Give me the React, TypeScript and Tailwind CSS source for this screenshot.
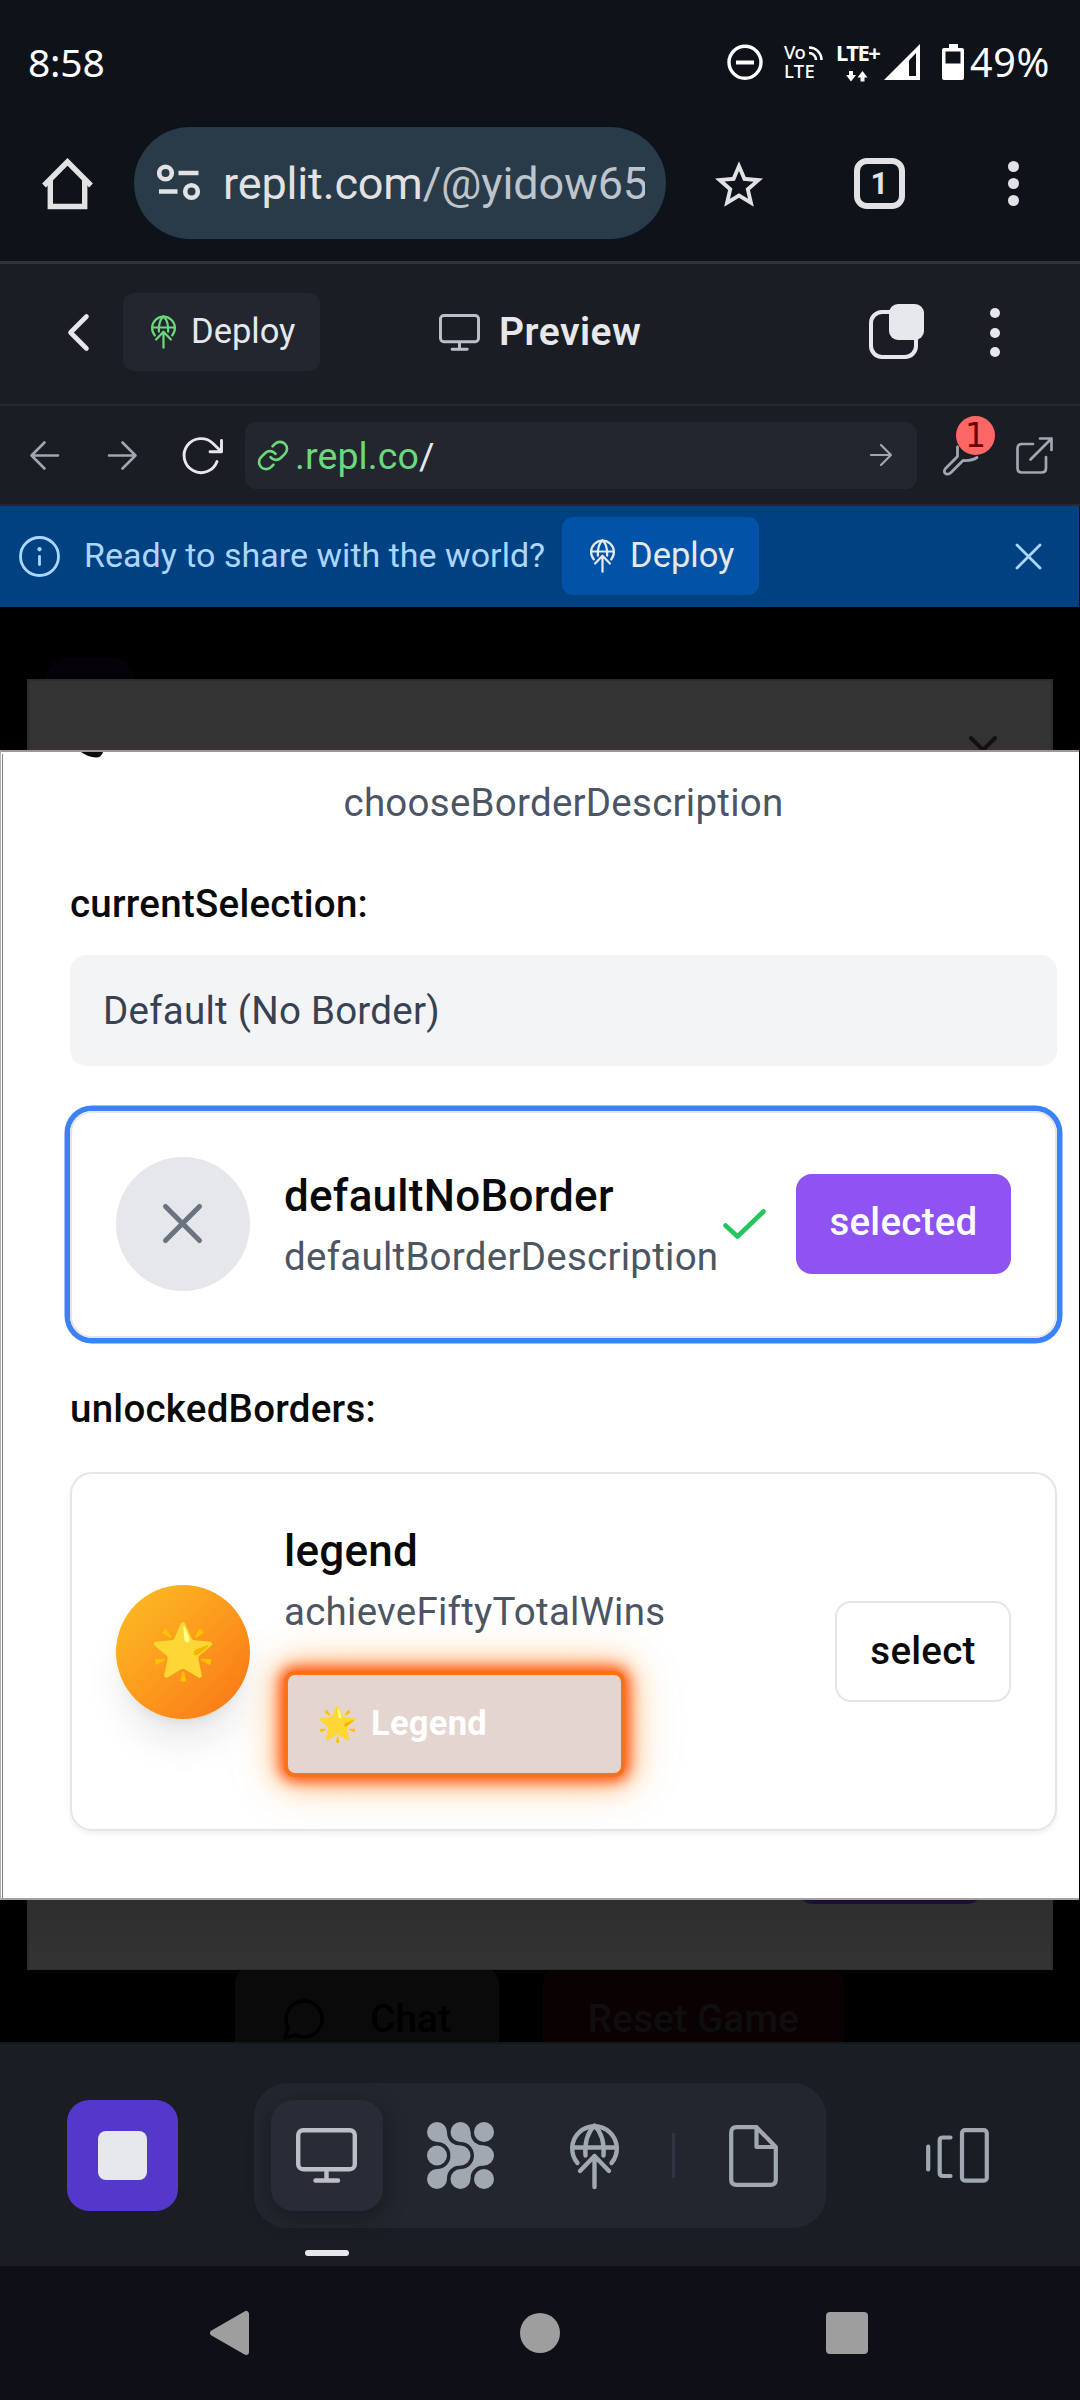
import type { ReactNode } from "react";

function Stroke({ w, h, vb, sw, children, className = "" }: { w: number; h: number; vb?: string; sw: number; children: ReactNode; className?: string }) {
  return (
    <svg width={w} height={h} viewBox={vb ?? `0 0 ${w} ${h}`} fill="none" stroke="currentColor" strokeWidth={sw} strokeLinecap="round" strokeLinejoin="round" className={`block shrink-0 overflow-visible ${className}`}>
      {children}
    </svg>
  );
}

function DeployIcon({ w, className = "" }: { w: number; className?: string }) {
  return (
    <Stroke w={w} h={(w * 66) / 49} vb="0 0 49 66" sw={4.4} className={className}>
      <path d="M7.5 40A22.3 22.3 0 1 1 41.5 40" />
      <path d="M2.5 24.5H46.5" />
      <path d="M15.5 32.5C14.5 20 18 9 24.5 2.5C31 9 34.500 20 33.500 32.500" />
      <path d="M24.500 64V33M10 48L24.500 33L39 48" />
    </Stroke>
  );
}

function MonitorIcon({ w, h, className = "" }: { w: number; h: number; className?: string }) {
  return (
    <Stroke w={w} h={h} vb="0 0 61 55" sw={4.4} className={className}>
      <rect x="2.200" y="2.200" width="56.600" height="39" rx="5" />
      <path d="M30.500 42V52M19.500 52.500H42" />
    </Stroke>
  );
}

function StatusBar() {
  return (
    <div className="flex h-[124px] items-start bg-[#0e131a] pl-[28px] font-['Noto_Sans'] text-white">
      <span className="mt-[35px] w-[90px] text-[39px] leading-[54px] tracking-[-0.200px]">8:58</span>
      <Stroke w={36} h={36} sw={3.4} className="ml-[609px] mt-[44px]">
        <circle cx="18" cy="18.300" r="16" />
        <path d="M11 18.500H25" strokeWidth="4" strokeLinecap="square" />
      </Stroke>
      <div className="relative ml-[21px] mt-[42px] h-[40px] w-[38px] font-['Noto_Sans'] text-[18.500px] font-medium leading-[19px]">
        <div className="tracking-[-0.5px]">Vo</div>
        <div className="tracking-[0.3px]">LTE</div>
        <svg width="14" height="16" className="absolute left-[25px] top-[4px]" fill="none" stroke="currentColor" strokeWidth="2.600">
          <path d="M0 1.500A12.500 12.500 0 0 1 12.500 14M0 7A7 7 0 0 1 7 14" />
        </svg>
      </div>
      <div className="ml-[14px] mt-[41px] w-[48px] font-['Noto_Sans'] text-[22px] font-bold leading-[22px] tracking-[-1.500px]">
        LTE+
        <svg width="22" height="11" viewBox="0 0 22 11" className="ml-[10px] mt-[8px] block" fill="currentColor">
          <path d="M3 0h4v4h3L5 10.500L0 4h3zM14.500 10.500h4v-4h3L16.500 0L11.500 6.500h3z" />
        </svg>
      </div>
      <svg width="36" height="36" viewBox="0 0 36 36" className="mt-[44px] shrink-0">
        <path d="M36 0V36H0Z" fill="#fff" />
        <path d="M25 16.500L32 9V32H25Z" fill="#0e131a" />
      </svg>
      <svg width="22" height="36" viewBox="0 0 22 36" className="ml-[22px] mt-[44px] shrink-0">
        <path d="M7 0h9v4h4q2 0 2 2v28q0 2-2 2H2q-2 0-2-2V6q0-2 2-2h5z" fill="#fff" />
        <path d="M3.500 7.500h15v12h-15z" fill="#0e131a" />
      </svg>
      <span className="ml-[6px] mt-[35px] text-[39.500px] leading-[54px] tracking-[0.700px]">49%</span>
    </div>
  );
}

function BrowserBar() {
  return (
    <div className="flex h-[137px] items-start bg-[#0e131a] pl-[42px] text-[#e2e2e5]">
      <svg width="51" height="52" viewBox="0 0 51 52" className="mt-[34px] shrink-0" fill="none" stroke="currentColor" strokeWidth="5.400">
        <path d="M2 27.500L25.500 3.800L49 27.500" />
        <path d="M8.300 22V48.500H42.700V22" />
      </svg>
      <div className="ml-[41px] mt-[3px] flex h-[112px] w-[532px] items-center rounded-full bg-[#293a48] pl-[23px] pr-[21px]">
        <svg width="44" height="38" viewBox="0 0 44 38" className="shrink-0" fill="none" stroke="currentColor" strokeWidth="4.600">
          <circle cx="8.500" cy="9" r="6.300" />
          <path d="M21.500 9H41.500M2 27.500H20.500" />
          <circle cx="34.500" cy="27.500" r="6.300" />
        </svg>
        <div className="ml-[22px] mt-[1px] flex-1 overflow-hidden whitespace-nowrap font-['Roboto'] text-[45px] leading-[60px] tracking-[-0.150px]">
          replit.com<span className="text-[#bdc4cb]">/@yidow65</span>
        </div>
      </div>
      <svg width="48" height="46" viewBox="2 2 20 19" className="ml-[49px] mt-[37px] shrink-0" fill="currentColor">
        <path d="M22 9.240l-7.190-.620L12 2 9.190 8.630 2 9.240l5.460 4.730L5.820 21 12 17.270 18.180 21l-1.630-7.030zM12 15.400l-3.760 2.270 1-4.280-3.320-2.880 4.380-.380L12 6.100l1.710 4.040 4.380.380-3.320 2.880 1 4.280z" />
      </svg>
      <div className="ml-[91px] mt-[34px] flex h-[51px] w-[51px] items-center justify-center rounded-[13px] border-[6px] border-[#e2e2e5] pt-[2px] font-['Roboto'] text-[31px] font-bold">1</div>
      <div className="ml-[103px] mt-[37px] flex flex-col gap-[6px]">
        <i className="h-[11px] w-[11px] rounded-full bg-[#e2e2e5]" />
        <i className="h-[11px] w-[11px] rounded-full bg-[#e2e2e5]" />
        <i className="h-[11px] w-[11px] rounded-full bg-[#e2e2e5]" />
      </div>
    </div>
  );
}

function PreviewHeader() {
  return (
    <div className="flex h-[145px] items-start border-b-2 border-t-[3px] border-b-[#252830] border-t-[#2f333d] bg-[#1b1d25] pl-[68px] text-[#e6e8ec]">
      <Stroke w={21} h={37} sw={4.6} className="mt-[50px]">
        <path d="M18.500 2.500L2.500 18.500L18.500 34.500" />
      </Stroke>
      <div className="ml-[34px] mt-[29px] flex h-[78px] w-[197px] items-center rounded-[11px] bg-[#23262e] pl-[28px]">
        <DeployIcon w={25} className="text-[#6bd87b]" />
        <span className="-mt-[2px] ml-[15px] text-[34.500px] leading-[48px]">Deploy</span>
      </div>
      <MonitorIcon w={41} h={37} className="ml-[119px] mt-[50px] text-[#bdbfc8]" />
      <span className="ml-[19px] mt-[41px] w-[159px] text-[39px] font-semibold leading-[54px] tracking-[0.500px]">Preview</span>
      <svg width="56" height="56" viewBox="0 0 56 56" className="ml-[211px] mt-[40px] shrink-0">
        <rect x="2" y="8" width="45" height="45" rx="11" fill="none" stroke="#e6e8ec" strokeWidth="4" />
        <rect x="20" y="0" width="35" height="36" rx="9" fill="#e6e8ec" />
      </svg>
      <div className="ml-[65px] mt-[44px] flex flex-col gap-[9.500px]">
        <i className="h-[10px] w-[10px] rounded-full bg-[#e6e8ec]" />
        <i className="h-[10px] w-[10px] rounded-full bg-[#e6e8ec]" />
        <i className="h-[10px] w-[10px] rounded-full bg-[#e6e8ec]" />
      </div>
    </div>
  );
}

function AddressRow() {
  return (
    <div className="flex h-[100px] items-start border-b-2 border-[#252830] bg-[#1b1d25] pl-[30px] text-[#a1a6af]">
      <Stroke w={29} h={29} sw={2.600} className="mt-[35px]">
        <path d="M28 14.500H1.500M14.500 1.500L1.500 14.500L14.500 27.500" />
      </Stroke>
      <Stroke w={29} h={29} sw={2.600} className="ml-[49px] mt-[35px]">
        <path d="M1 14.500H27.500M14.500 1.500L27.500 14.500L14.500 27.500" />
      </Stroke>
      <Stroke w={41} h={37} sw={2.900} className="ml-[45px] mt-[31px] text-[#e6e8ec]">
        <path d="M35 24.500A17 17 0 1 1 31 6.500L39.500 14.700M39.500 3.500V14.700H28" />
      </Stroke>
      <div className="ml-[22px] mt-[16px] flex h-[67px] w-[672px] items-center rounded-[11px] bg-[#23262e] pl-[13px] pr-[25px]">
        <Stroke w={30} h={31} vb="1.300 1.300 21.400 21.400" sw={1.900} className="text-[#6bd87b]">
          <path d="M10.200 13.200a5 5 0 0 0 7.300.600l3-3a5 5 0 0 0-7.100-7.100l-1.700 1.700" />
          <path d="M13.800 10.800a5 5 0 0 0-7.300-.600l-3 3a5 5 0 0 0 7.100 7.100l1.700-1.700" />
        </Stroke>
        <span className="ml-[7px] mt-[1px] flex-1 text-[37.500px] leading-[50px] tracking-[0.100px] text-[#6bd87b]">.repl.co<span className="text-[#e6e8ec]">/</span></span>
        <Stroke w={22} h={22} sw={2.200} className="-mt-[2px]">
          <path d="M1 11H21M11 1L21 11L11 21" />
        </Stroke>
      </div>
      <div className="relative ml-[26px] mt-[32px]">
        <Stroke w={38} h={38} sw={2.800}>
          <path d="M14.500 9V18.500L2.500 30.500Q0 34 2.800 35.800Q5.500 37 8 34.500L20 22.500Q29 23 34 19.500" />
        </Stroke>
        <span className="absolute left-[13px] top-[-22px] flex h-[39px] w-[39px] items-center justify-center rounded-full bg-[#ff6767] font-['DejaVu_Sans'] text-[33px] text-[#6b0000]">1</span>
      </div>
      <Stroke w={37} h={37} sw={2.700} className="ml-[35px] mt-[31px]">
        <path d="M17 7H6Q1.500 7 1.500 11.500V31Q1.500 35.500 6 35.500H25.500Q30 35.500 30 31V20" />
        <path d="M24 1.500H35.500V13M35.500 1.500L14.500 22.500" />
      </Stroke>
    </div>
  );
}

function Banner() {
  return (
    <div className="flex h-[101px] items-center border-r border-[#0e131a] bg-[#004182] pl-[19px] text-[#abd6ff]">
      <Stroke w={41} h={41} sw={2.800}>
        <circle cx="20.500" cy="20.500" r="19" />
        <path d="M20.500 20.500V28.500" />
        <path d="M20.500 13.200V13.300" strokeWidth="4.200" />
      </Stroke>
      <span className="-mt-[3px] ml-[24px] w-[462px] whitespace-nowrap text-[34px] leading-[48px] tracking-[0.020px]">Ready to share with the world?</span>
      <div className="-mt-[1px] ml-[16px] flex h-[78px] w-[197px] items-center rounded-[11px] bg-[#0053a6] pl-[28px] text-[#e6e8ec]">
        <DeployIcon w={25} />
        <span className="-mt-[2px] ml-[15px] text-[34.500px] leading-[48px]">Deploy</span>
      </div>
      <Stroke w={25} h={25} sw={2.800} className="ml-[257px]">
        <path d="M1 1L24 24M24 1L1 24" />
      </Stroke>
    </div>
  );
}

function BorderDialog() {
  return (
    <div className="absolute left-0 top-[143px] h-[1150px] w-[1079px] overflow-hidden border-b-2 border-l border-t-2 border-b-[#a3a3a3] border-l-[#b5b5b5] border-t-[#9c9696] bg-white font-['Roboto'] text-[38.500px] leading-[55px] tracking-[0.250px] text-[#0a0a0a]">
      <div className="absolute left-px top-[2px] h-full w-px bg-[#8a8585]" />
      <svg width="22" height="6" viewBox="0 0 22 6" className="absolute left-[80px] top-0" fill="#0a0a0a">
        <path d="M0 0H22Q20.500 5.500 15 5.500Q7 5 0 0Z" />
      </svg>
      <div className="flex flex-col pl-[69px] pr-[22px] pt-[23px]">
        <p className="text-center text-[#4b5563]">chooseBorderDescription</p>
        <h3 className="mt-[46px] font-medium">currentSelection:</h3>
        <div className="mt-[24px] flex h-[111px] items-center rounded-[16px] bg-[#f3f4f6] px-[33px] text-[#374151]">Default (No Border)</div>
        <div className="mt-[45px] flex h-[227px] items-center rounded-[22px] border-2 border-[#e5e5e5] pb-[2px] pl-[44px] pr-[44px] shadow-[0_0_0_5.500px_#3b82f6]">
          <div className="flex h-[134px] w-[134px] shrink-0 items-center justify-center rounded-full bg-[#e5e7eb] pr-[2px] text-[#6b7280]">
            <Stroke w={39} h={39} sw={5}>
              <path d="M2.500 2.500L36.500 36.500M36.500 2.500L2.500 36.500" />
            </Stroke>
          </div>
          <div className="ml-[34px] w-[432px]">
            <div className="text-[44px] font-medium leading-[66px]">defaultNoBorder</div>
            <div className="text-[#4b5563]">defaultBorderDescription</div>
          </div>
          <Stroke w={43} h={30} sw={4.600} className="ml-[7px] text-[#22c55e]">
            <path d="M2.500 16.500L14.500 27.500L40.500 2.500" />
          </Stroke>
          <div className="ml-auto flex h-[100px] w-[215px] items-center justify-center rounded-[16px] bg-[#8f52f3] pb-[4px] font-medium text-[#f8fafc]">selected</div>
        </div>
        <h3 className="mt-[43px] font-medium">unlockedBorders:</h3>
        <div className="mt-[36px] flex h-[359px] items-center rounded-[22px] border-2 border-[#e5e5e5] pl-[44px] pr-[44px] shadow-[0_3px_5px_rgba(0,0,0,0.060)]">
          <div className="flex h-[134px] w-[134px] shrink-0 items-center justify-center rounded-full bg-linear-to-br from-[#fbbf24] to-[#f97316] font-['Noto_Color_Emoji'] text-[53px] tracking-normal shadow-[0_28px_41px_-8px_rgba(0,0,0,0.100),0_11px_16px_-11px_rgba(0,0,0,0.100)]">🌟</div>
          <div className="mb-[9px] ml-[34px] w-[341px]">
            <div className="text-[44px] font-medium leading-[66px]">legend</div>
            <div className="text-[#4b5563]">achieveFiftyTotalWins</div>
            <div className="mt-[32px] flex h-[106px] items-center rounded-[11px] border-4 border-[#f97316] bg-[#e4d5d1] pl-[29px] text-[34.500px] font-bold text-white shadow-[0_0_14px_4px_#ff4f0c,0_0_30px_8px_rgba(255,130,20,0.500),0_0_60px_6px_rgba(255,165,0,0.150)]">
              <span className="w-[54px] font-['Noto_Color_Emoji'] text-[33px] tracking-normal">🌟</span>Legend
            </div>
          </div>
          <div className="ml-auto flex h-[101px] w-[176px] items-center justify-center rounded-[16px] border-[2.500px] border-[#e5e5e5] bg-white pb-[2px] font-medium">select</div>
        </div>
      </div>
    </div>
  );
}

function AppView() {
  return (
    <div className="relative h-[1435px] overflow-hidden bg-black font-['Roboto']">
      <div className="absolute left-[46px] top-[50px] h-[60px] w-[88px] rounded-[22px] bg-[#060209]" />
      <div className="absolute left-[235px] top-[1360px] flex h-[104px] w-[264px] items-center rounded-[16px] bg-[#0a0a0a] pl-[50px] text-[38.500px] font-medium tracking-[0.250px] text-black">
        <Stroke w={38} h={38} vb="2.500 2.500 19 19" sw={1.800}>
          <path d="M7.900 20A9 9 0 1 0 4 16.100L2.500 21.500Z" />
        </Stroke>
        <span className="ml-[47px]">Chat</span>
      </div>
      <div className="absolute left-[543px] top-[1360px] flex h-[104px] w-[301px] items-center justify-center rounded-[16px] bg-[#0a0102] text-[38.500px] font-medium tracking-[0.250px] text-[#0e0e0e]">Reset Game</div>
      <div className="absolute left-[27px] top-[72px] h-[1291px] w-[1026px] border-2 border-[#2c2c2c] bg-[#333]">
        <Stroke w={26} h={26} sw={4} className="absolute left-[941px] top-[56px] text-[#111]">
          <path d="M1 1L25 25M25 1L1 25" />
        </Stroke>
        <div className="absolute left-0 top-[1218px] h-[70px] w-full bg-linear-to-b from-[#2e2e2e] to-[#333]" />
        <div className="absolute left-[768px] top-[1170px] h-[53px] w-[186px] rounded-[16px] bg-[#1c1030]" />
      </div>
      <BorderDialog />
    </div>
  );
}

/* Nine-dot mark with chevron bridges running through the grid. */
function GridMark() {
  return (
    <svg width="67" height="67" viewBox="0 0 67 67" className="block shrink-0" fill="#a1a8b2">
      <circle cx="10" cy="10" r="10" />
      <circle cx="33.500" cy="10" r="10" />
      <circle cx="57" cy="10" r="10" />
      <circle cx="10" cy="33.500" r="10" />
      <circle cx="33.500" cy="33.500" r="10" />
      <circle cx="57" cy="33.500" r="10" />
      <circle cx="10" cy="57" r="10" />
      <circle cx="33.500" cy="57" r="10" />
      <circle cx="57" cy="57" r="10" />
      <path d="M20 10C20 19 26 23.500 33.500 23.500V43.500C26 43.500 20 48 20 57L10 47C18 47 23.500 41 23.500 33.500C23.500 26 18 20 10 20Z" />
      <path d="M43.500 10C43.500 19 49.500 23.500 57 23.500V43.500C49.500 43.500 43.500 48 43.500 57L33.500 47C41.500 47 47 41 47 33.500C47 26 41.500 20 33.500 20Z" />
    </svg>
  );
}

function Dock() {
  return (
    <div className="flex h-[224px] items-start border-t-2 border-[#14161d] bg-[#1b1d25] pl-[67px] text-[#a1a8b2]">
      <div className="mt-[56px] flex h-[111px] w-[111px] items-center justify-center rounded-[22px] bg-[#5438cb]">
        <div className="h-[49px] w-[49px] rounded-[8px] bg-[#e6e8ec]" />
      </div>
      <div className="ml-[76px] mt-[39px] flex h-[145px] w-[572px] items-center rounded-[33px] bg-[#23262e] pl-[17px]">
        <div className="relative flex h-[111px] w-[112px] items-center justify-center rounded-[22px] bg-[#292b36] pr-[2px] text-[#bdbfc8] shadow-[0_6px_24px_rgba(2,2,3,0.320)]">
          <MonitorIcon w={61} h={55} />
          <div className="absolute left-[34px] top-[150px] h-[6px] w-[44px] rounded-full bg-[#e6e8ec]" />
        </div>
        <div className="ml-[44px]"><GridMark /></div>
        <DeployIcon w={49} className="ml-[76px]" />
        <div className="ml-[53px] h-[45px] w-[3px] bg-[#303340]" />
        <Stroke w={49} h={62} sw={4.200} className="ml-[54px]">
          <path d="M27.500 2.200H7.500Q2.200 2.200 2.200 7.500V54.500Q2.200 59.800 7.500 59.800H41.500Q46.800 59.800 46.800 54.500V22L27.500 2.200V22H46.800" />
        </Stroke>
      </div>
      <Stroke w={63} h={55} sw={4.200} className="ml-[100px] mt-[84px]">
        <path d="M2.200 18.500V41.500M24.500 9.500H17Q13.700 9.500 13.700 12.500V45Q13.700 48 17 48H24.500" />
        <rect x="36" y="2.200" width="24.800" height="50.500" rx="3" />
      </Stroke>
    </div>
  );
}

function SystemNav() {
  return (
    <div className="flex h-[134px] items-center bg-[#0f0f17] pl-[210px]">
      <svg width="39" height="46" viewBox="0 0 39 46" className="block shrink-0" fill="#9e9e9f" stroke="#9e9e9f" strokeWidth="6" strokeLinejoin="round">
        <path d="M3 23L36 4V42Z" />
      </svg>
      <div className="ml-[271px] h-[40px] w-[40px] rounded-full bg-[#9e9e9f]" />
      <div className="ml-[266px] h-[42px] w-[42px] rounded-[4px] bg-[#9e9e9f]" />
    </div>
  );
}

export default function App() {
  return (
    <div className="flex h-[2400px] w-[1080px] flex-col overflow-hidden bg-[#0e131a] font-['Roboto',sans-serif]">
      <StatusBar />
      <BrowserBar />
      <PreviewHeader />
      <AddressRow />
      <Banner />
      <AppView />
      <Dock />
      <SystemNav />
    </div>
  );
}
